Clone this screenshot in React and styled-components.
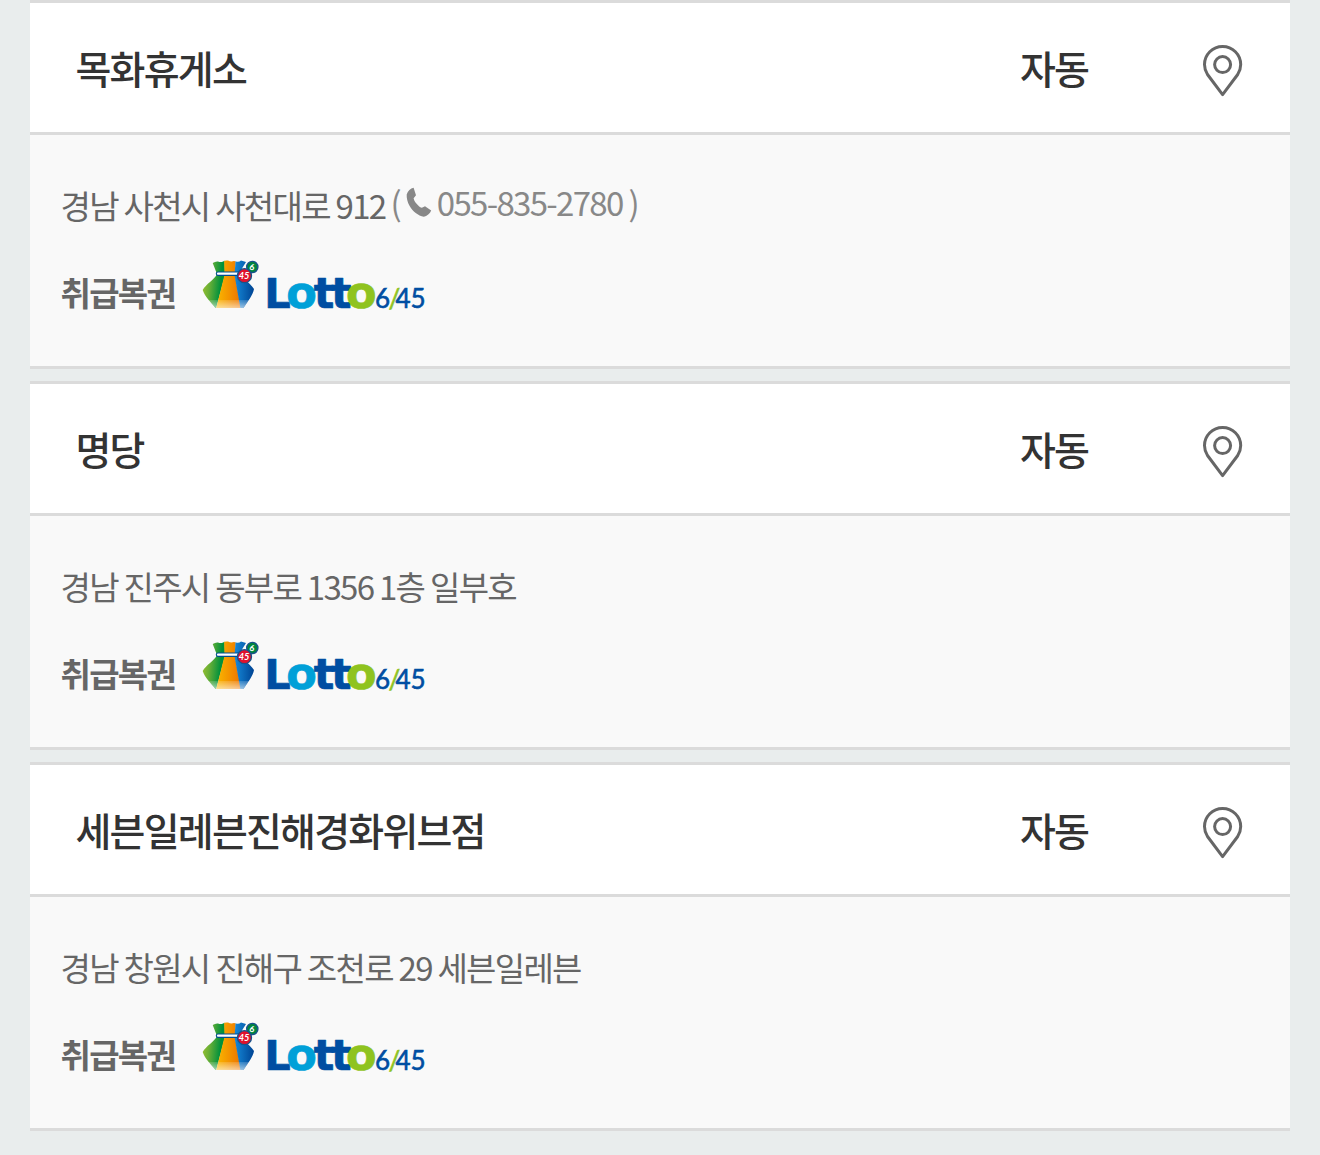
import React from 'react';
import styled, { createGlobalStyle } from 'styled-components';

const GlobalStyle = createGlobalStyle`
  * {
    box-sizing: border-box;
  }

  body {
    margin: 0;
    background: #e9eded;
    font-family: "Noto Sans CJK KR", "Noto Sans", sans-serif;
    letter-spacing: -1.7px;
  }
`;

const StoreList = styled.ul`
  list-style: none;
  margin: 0;
  padding: 0 30px;
  min-height: 1155px;
  display: flex;
  flex-direction: column;
  gap: 12px;
`;

const StoreCard = styled.li`
  border-top: 3px solid #dbdbdb;
  border-bottom: 3px solid #dbdbdb;
`;

const StoreHeader = styled.div`
  display: flex;
  align-items: center;
  height: 132px;
  padding: 0 47px 0 45.5px;
  background: #fff;
  border-bottom: 3px solid #dbdbdb;
  color: #333;
  font-size: 39px;
  font-weight: 500;
  line-height: 57px;
  letter-spacing: -1.78px;
`;

const StoreName = styled.strong`
  flex: 1;
  font-weight: 500;
`;

const Method = styled.span`
  width: 183px;
`;

const MapButton = styled.button`
  display: block;
  margin-top: 6px;
  padding: 0;
  border: 0;
  background: none;
  cursor: pointer;

  svg {
    display: block;
  }
`;

const StoreBody = styled.div`
  height: 231px;
  padding: 46px 30.5px 0;
  background: #f9f9f9;
  color: #666;
  font-size: 33px;
  line-height: 48px;
`;

const Address = styled.p`
  display: flex;
  margin: 0;
  white-space: pre;
`;

const Phone = styled.span`
  display: flex;
  align-items: center;
  height: 42px;
  margin-left: 5px;
  color: #888;

  svg {
    margin: 0 5px 0 6px;
  }
`;

const PhoneEnd = styled.span`
  margin-left: 6px;
`;

const Products = styled.div`
  display: flex;
  align-items: flex-start;
  margin-top: 26px;
`;

const ProductLabel = styled.strong`
  width: 139.5px;
  margin-top: 13px;
  font-weight: 700;
`;

const Logo = styled.svg`
  display: block;
  overflow: visible;
  letter-spacing: 0;
`;

const PinIcon = () => (
  <svg width="40" height="52" viewBox="0 0 40 52" fill="none" stroke="#666" strokeWidth="3">
    <path d="M19.600 49.600 4.500 29.500C2.500 26.500 1.500 23.500 1.500 19.600a18.100 18.100 0 0 1 36.200 0c0 3.900-1 6.900-3 9.900Z" strokeLinejoin="round" />
    <circle cx="19.600" cy="19.600" r="8" />
  </svg>
);

const PhoneIcon = () => (
  <svg width="26" height="30" viewBox="0 0 26 30" fill="#888">
    <path d="M7.600 .8 10 8.300 7.600 11.200C8.200 13.800 9.600 16 12 18.200 13.300 19.500 14.500 20.400 15.900 20.800L19 19.200 25.200 23.500C24 26.500 21 29.200 17.800 29.700 12.300 29 6.500 24.300 3.500 18.800 1.400 15 .5 11 .7 7.500 1.800 4 4.500 1.500 7.600 .8Z" />
  </svg>
);

const LottoLogo = ({ id }) => (
  <Logo width="228" height="58" viewBox="0 0 228 58">
    <defs>
      <linearGradient id={`green-${id}`} x1="0" x2="1" y1="0" y2="0.2">
        <stop offset="0" stopColor="#b5c92a" />
        <stop offset="0.450" stopColor="#6db036" />
        <stop offset="0.900" stopColor="#00913c" />
      </linearGradient>
      <linearGradient id={`orange-${id}`} x1="0" x2="1" y1="0" y2="0">
        <stop offset="0" stopColor="#fbb800" />
        <stop offset="1" stopColor="#ec7300" />
      </linearGradient>
      <linearGradient id={`blue-${id}`} x1="0" x2="1" y1="0" y2="0">
        <stop offset="0" stopColor="#1689d8" />
        <stop offset="0.800" stopColor="#004696" />
      </linearGradient>
      <linearGradient id={`shine-${id}`} x1="0" x2="0" y1="0" y2="1">
        <stop offset="0" stopColor="#fff" stopOpacity="0.15" />
        <stop offset="1" stopColor="#fff" stopOpacity="0.65" />
      </linearGradient>
      <clipPath id={`bag-${id}`}>
        <path d="M12.700 8q3-2 5.300-1.500 3 1.200 5 0 2-1.500 5-1 3 1.500 6 .5l2 .5q3 1 5-1l5 1.500-5 8-1 5C43 23 50 28 54 34c-1 6-6 12-10.500 19H15.500C11 47 5 42 2.700 35 6 29 15 24 17 19Z" />
      </clipPath>
    </defs>
    <g clipPath={`url(#bag-${id})`}>
      <path d="M0 0h24.500l.5 20-9 34H0Z" fill={`url(#green-${id})`} />
      <path d="M24 0h12l-1 20 6 34H16l8.500-34Z" fill={`url(#orange-${id})`} />
      <path d="M36 0h22v54H40.500l-6-34Z" fill={`url(#blue-${id})`} />
      <path d="M0 45h58v9H0Z" fill={`url(#shine-${id})`} />
    </g>
    <path d="M18 18.700h21" stroke="#004e91" strokeWidth="4.400" strokeLinecap="round" />
    <path d="M18 18.700h21" stroke="#fff" strokeWidth="2.200" strokeLinecap="round" />
    <circle cx="52.300" cy="12" r="5.600" fill="#00853e" stroke="#17528b" strokeWidth="1.400" />
    <circle cx="44.500" cy="20.700" r="7" fill="#e0122d" stroke="#17528b" strokeWidth="1.300" />
    <g fill="#fff" fontFamily="Lato, sans-serif" fontWeight="700" textAnchor="middle">
      <text x="52" y="15" fontSize="8.500" transform="rotate(12 52 12)">6</text>
      <text x="44" y="24" fontSize="9.200" fontStyle="italic">45</text>
    </g>
    <text y="53" fontFamily="DejaVu Sans, sans-serif" fontWeight="700" fill="#004ea2" stroke="#004ea2" strokeWidth="0.700" strokeLinejoin="round">
      <tspan x="64.300" fontSize="41.500">L</tspan>
      <tspan x="86.300" fontSize="44.500" fill="#00a0d8" stroke="#00a0d8">o</tspan>
      <tspan x="113.700" fontSize="43" letterSpacing="-3.200">tt</tspan>
      <tspan x="145.900" fontSize="44.500" fill="#8fc31f" stroke="#8fc31f">o</tspan>
    </text>
    <text y="53" fontFamily="Lato, sans-serif" fontSize="26" fill="#004ea2" stroke="#004ea2" strokeWidth="0.600">
      <tspan x="175">6</tspan>
      <tspan x="188.500" fill="#8fc31f" stroke="#8fc31f">/</tspan>
      <tspan x="195.500">45</tspan>
    </text>
  </Logo>
);

const stores = [
  { id: 1, name: '목화휴게소', method: '자동', address: '경남 사천시 사천대로 912', phone: '055-835-2780' },
  { id: 2, name: '명당', method: '자동', address: '경남 진주시 동부로 1356 1층 일부호' },
  { id: 3, name: '세븐일레븐진해경화위브점', method: '자동', address: '경남 창원시 진해구 조천로 29 세븐일레븐' },
];

const App = () => (
  <>
    <GlobalStyle />
    <StoreList>
      {stores.map((store) => (
        <StoreCard key={store.id}>
          <StoreHeader>
            <StoreName>{store.name}</StoreName>
            <Method>{store.method}</Method>
            <MapButton type="button" aria-label="지도">
              <PinIcon />
            </MapButton>
          </StoreHeader>
          <StoreBody>
            <Address>
              {store.address}
              {store.phone && (
                <Phone>
                  (<PhoneIcon />
                  {store.phone}
                  <PhoneEnd>)</PhoneEnd>
                </Phone>
              )}
            </Address>
            <Products>
              <ProductLabel>취급복권</ProductLabel>
              <LottoLogo id={store.id} />
            </Products>
          </StoreBody>
        </StoreCard>
      ))}
    </StoreList>
  </>
);

export default App;
